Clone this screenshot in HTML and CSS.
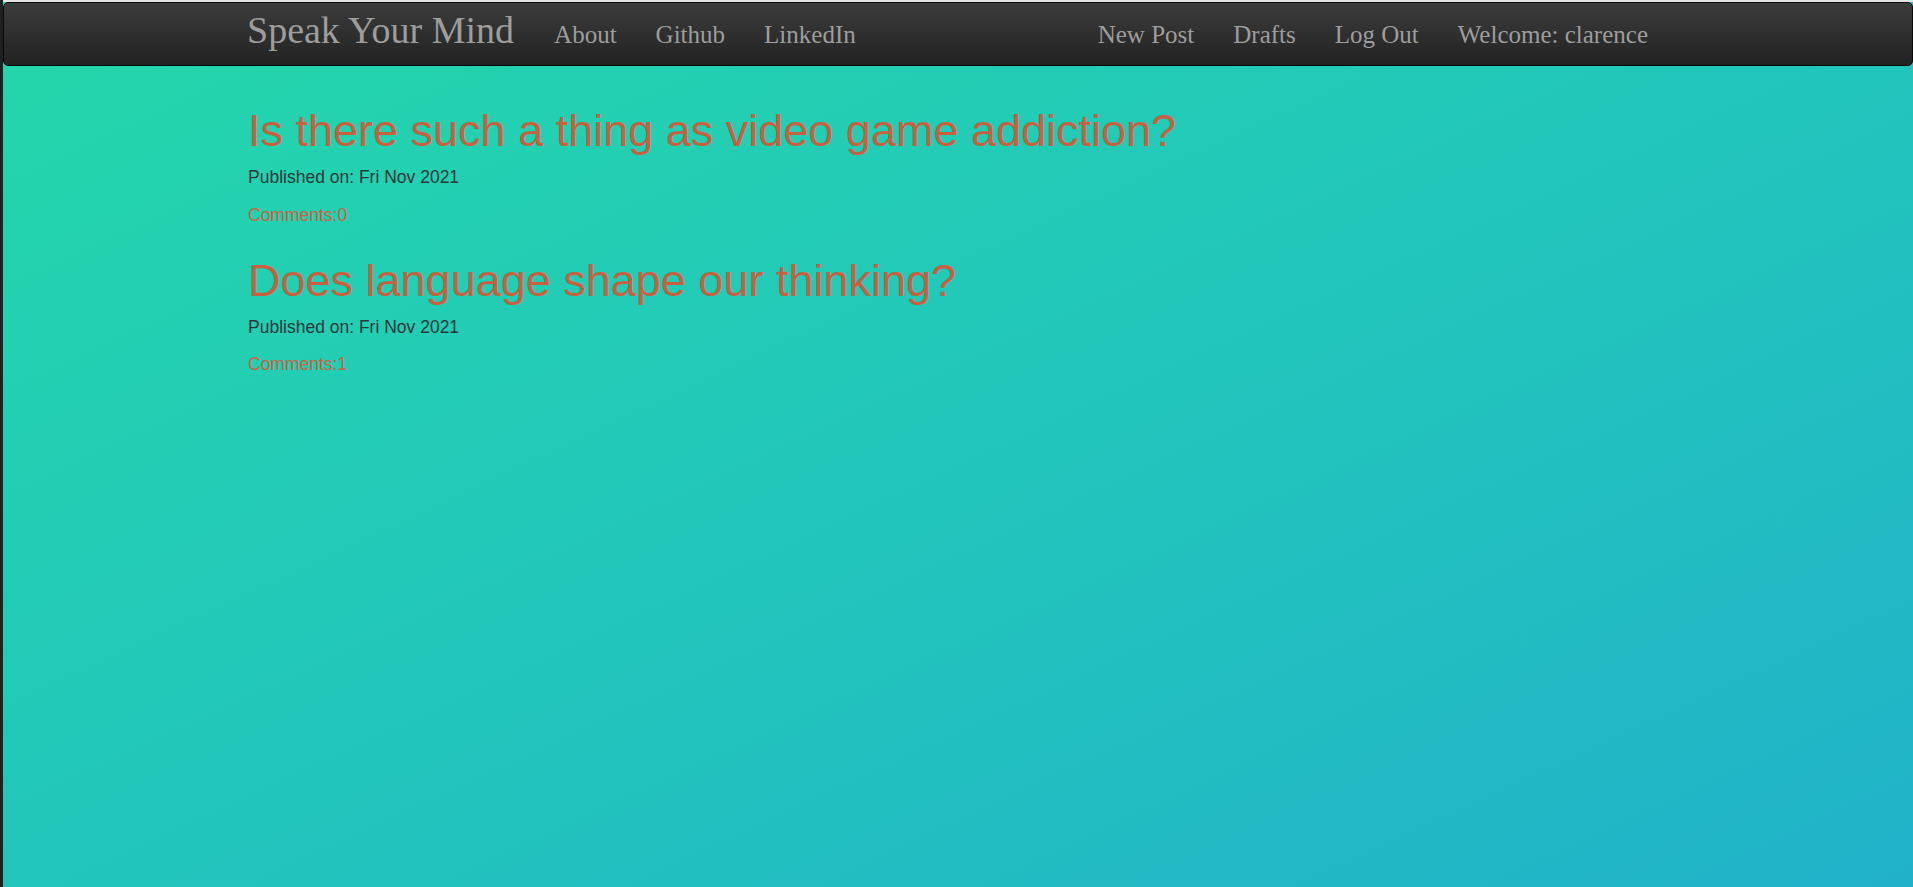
FILE: index.html
```html
<!DOCTYPE html>
<html lang="en">
<head>
<meta charset="utf-8">
<title>Speak Your Mind</title>
<link rel="stylesheet" href="styles.css">
</head>
<body>
<div class="page">
  <nav class="navbar">
    <div class="nav-inner">
      <a class="brand" href="#">Speak Your Mind</a>
      <ul class="nav-links">
        <li><a href="#">About</a></li>
        <li><a href="#">Github</a></li>
        <li><a href="#">LinkedIn</a></li>
      </ul>
      <ul class="nav-links nav-right">
        <li><a href="#">New Post</a></li>
        <li><a href="#">Drafts</a></li>
        <li><a href="#">Log Out</a></li>
        <li><span>Welcome: clarence</span></li>
      </ul>
    </div>
  </nav>
  <main class="content">
    <article class="post">
      <h1 class="post-title">Is there such a thing as video game addiction?</h1>
      <p class="post-date">Published on: Fri Nov 2021</p>
      <p class="post-comments">Comments:0</p>
    </article>
    <article class="post">
      <h1 class="post-title">Does language shape our thinking?</h1>
      <p class="post-date">Published on: Fri Nov 2021</p>
      <p class="post-comments">Comments:1</p>
    </article>
  </main>
</div>
</body>
</html>
```

FILE: styles.css
```css
html, body {
  margin: 0;
  padding: 0;
  height: 100%;
}

body {
  font-family: "Liberation Sans", Arial, sans-serif;
  background: #1e2124;
}

.page {
  box-sizing: border-box;
  min-height: 100%;
  margin-left: 3px;
  border-top: 2px solid #e4e4e4;
  background: linear-gradient(to bottom right, #24d7aa 0%, #22c6bb 50%, #21b2ca 100%);
}

.navbar {
  box-sizing: border-box;
  height: 64px;
  padding-bottom: 8px;
  background: linear-gradient(to bottom, #3c3c3c 0%, #222222 100%);
  border: 1px solid #080808;
  border-radius: 5px;
  display: flex;
  align-items: center;
}

.nav-inner {
  box-sizing: border-box;
  width: 1420px;
  margin: 0 auto;
  padding-right: 19px;
  display: flex;
  align-items: baseline;
  font-family: "Liberation Serif", "Times New Roman", serif;
  color: #9d9d9d;
  transform: translateX(-1px);
}

.brand {
  font-size: 38px;
  color: #9d9d9d;
  text-decoration: none;
  margin-right: 40px;
}

.nav-links {
  list-style: none;
  margin: 0;
  padding: 0;
  display: flex;
  gap: 39px;
  font-size: 25px;
}

.nav-links a,
.nav-links span {
  color: #9d9d9d;
  text-decoration: none;
}

.nav-right {
  margin-left: auto;
}

.content {
  width: 1420px;
  margin: 0 auto;
  padding-top: 12px;
}

.post-title {
  font-size: 45px;
  font-weight: 400;
  line-height: 1.1;
  color: #c8603f;
  margin: 25px 0 9.5px;
  padding-top: 3px;
}

.post-date {
  font-size: 17.5px;
  line-height: 25px;
  color: #2a3938;
  margin: 0 0 12.5px;
}

.post-comments {
  font-size: 17.5px;
  line-height: 25px;
  color: #cf5f3f;
  margin: 0 0 12.5px;
}
```
